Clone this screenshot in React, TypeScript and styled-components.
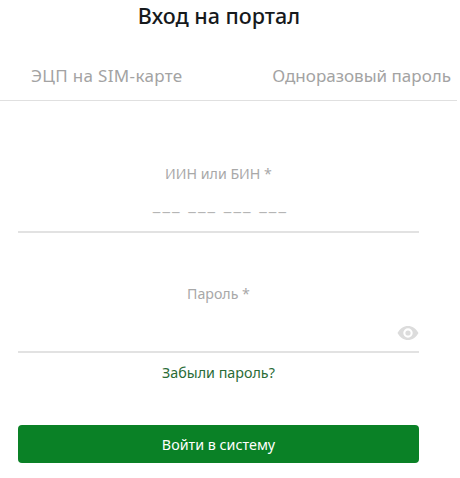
import React from 'react';
import styled, { createGlobalStyle } from 'styled-components';

const GlobalStyle = createGlobalStyle`
    html, body {
        margin: 0;
        padding: 0;
        background: #fff;
    }
    * {
        box-sizing: border-box;
    }
`;

const Page = styled.div`
    width: 460px;
    height: 478px;
    overflow: hidden;
    font-family: 'Noto Sans', 'Open Sans', sans-serif;
`;

const Title = styled.h1`
    margin: 0;
    width: 438px;
    height: 33px;
    line-height: 31px;
    text-align: center;
    font-size: 21.500px;
    font-weight: 500;
    color: #16191c;
`;

const Tabs = styled.div`
    width: 457px;
    height: 68px;
    padding: 27px 6px 0 31px;
    display: flex;
    justify-content: space-between;
    border-bottom: 1px solid #e0e0e0;
`;

const Tab = styled.div<{ $spacing?: number }>`
    font-size: 17px;
    line-height: 32px;
    letter-spacing: ${(p) => p.$spacing || 0}px;
    color: #a3a3a3;
`;

const Form = styled.form`
    width: 401px;
    margin-left: 18px;
    padding-top: 62px;
    display: flex;
    flex-direction: column;
`;

const Field = styled.div`
    height: 70px;
    display: flex;
    flex-direction: column;
    align-items: center;
    border-bottom: 2px solid #e2e2e2;
    position: relative;
    & + & {
        margin-top: 50px;
    }
`;

const Label = styled.label`
    font-size: 14.200px;
    line-height: 21px;
    color: #a8a8a8;
`;

const Mask = styled.div`
    margin-top: 9px;
    padding-left: 4px;
    font-size: 17px;
    line-height: 24px;
    letter-spacing: 2.100px;
    color: #b5b5b5;
    white-space: pre;
`;

const EyeButton = styled.span`
    position: absolute;
    right: 0;
    bottom: 10px;
    width: 22px;
    height: 16px;
    display: flex;
`;

const Forgot = styled.a`
    margin-top: 10px;
    height: 20px;
    line-height: 20px;
    text-align: center;
    font-size: 14.300px;
    color: #2a6b36;
`;

const Submit = styled.button`
    margin-top: 42px;
    height: 38px;
    border: none;
    border-radius: 4px;
    background: #0a8126;
    color: #fff;
    font-family: inherit;
    font-size: 14.300px;
    padding: 0;
`;

const App: React.FC = () => (
    <Page>
        <GlobalStyle />
        <Title>Вход на портал</Title>
        <Tabs>
            <Tab $spacing={0.33}>ЭЦП на SIM-карте</Tab>
            <Tab>Одноразовый пароль</Tab>
        </Tabs>
        <Form>
            <Field>
                <Label>ИИН или БИН *</Label>
                <Mask>{'___ ___ ___ ___'}</Mask>
            </Field>
            <Field>
                <Label>Пароль *</Label>
                <EyeButton>
                    <svg width="22" height="16" viewBox="0 0 22 16">
                        <path
                            fillRule="evenodd"
                            fill="#dcdcdc"
                            d="M0.5 8C3 3.5 6.8 1 11 1s8 2.5 10.500 7c-2.500 4.500-6.300 7-10.500 7S3 12.500 0.500 8zM11 3.300a4.700 4.700 0 1 0 0 9.400 4.700 4.700 0 0 0 0-9.400z"
                        />
                        <circle cx="11" cy="8" r="2.600" fill="#dcdcdc" />
                    </svg>
                </EyeButton>
            </Field>
            <Forgot>Забыли пароль?</Forgot>
            <Submit type="button">Войти в систему</Submit>
        </Form>
    </Page>
);

export default App;
